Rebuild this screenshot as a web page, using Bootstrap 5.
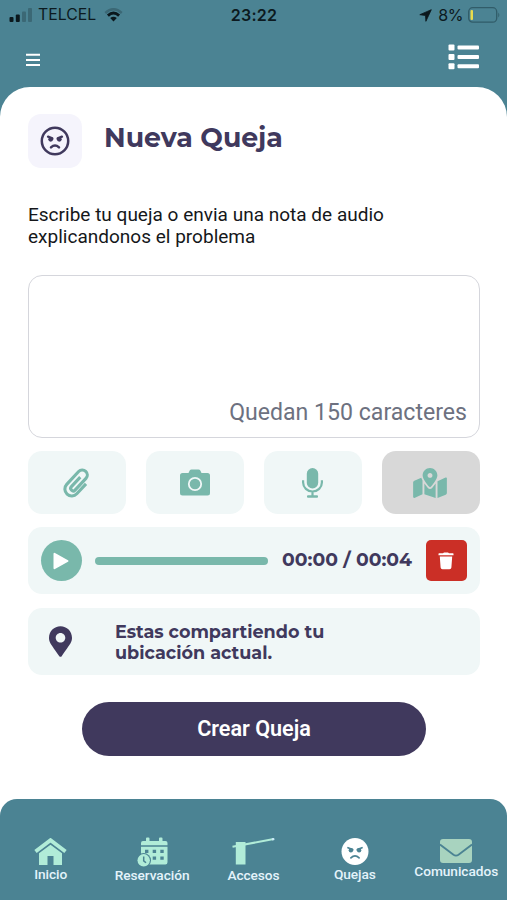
<!DOCTYPE html>
<html lang="es">
<head>
<meta charset="utf-8">
<meta name="viewport" content="width=device-width, initial-scale=1">
<title>Nueva Queja</title>
<link href="https://cdn.jsdelivr.net/npm/bootstrap@5.3.0/dist/css/bootstrap.min.css" rel="stylesheet">
<style>
:root{--teal:#4b8393;--green:#79b8ab;--pale:#f0f7f7;--ink:#40395d;--mint:#b1ecd8}
body{height:900px;background:var(--teal);font-family:Roboto,sans-serif;color:#15171a;overflow:hidden}
svg{display:block;flex:none}
.status-bar{height:30px;padding:0 8px 0 9px;font-family:Inter,sans-serif;font-size:16px;line-height:30px;color:#0c1a20}
.status-side{flex:1 1 0}
.carrier{font-size:15.8px;margin-left:6px;margin-right:8px}
.clock{font-weight:600;font-size:16px;letter-spacing:.3px}
.battery-level{margin-left:6px;margin-right:4px;letter-spacing:-.4px}
.top-bar{height:57px;padding:0 28px 0 26px}
.sheet{background:#fff;border-radius:30px 30px 0 0;padding:27px 27px 0 28px}
.face-tile{width:54px;height:54px;border-radius:13px;background:#f5f4fc}
.geo{font-family:Montserrat,Inter,sans-serif;font-weight:700;color:var(--ink)}
.title-text{font-size:26.8px;line-height:34px;margin:7px 0 0 22px}
.intro{font-size:19px;line-height:22px;letter-spacing:.01px;margin:36px 0 27px}
.note-box{height:163px;border:1.5px solid #d5d6dc;border-radius:14px;padding:0 12px 10px;font-size:23.1px;line-height:28px;color:#6d7180}
.tools{gap:20px;margin-top:13px}
.tool{flex:1 1 0;height:63px;border-radius:14px;background:var(--pale);color:var(--green);border:0}
.tool.chosen{background:#d8d8d8}
.strip{height:67px;border-radius:14px;background:var(--pale);margin-top:13px;padding:0 13px}
.strip + .strip{margin-top:14px}
.play{width:41px;height:41px;background:var(--green);border:0}
.track{height:8px;border-radius:4px;background:var(--green);margin:0 14px 0 13px;width:173px}
.time{font-size:18.8px;white-space:nowrap}
.trash{width:41px;height:41px;border-radius:5px;background:#cb2f26;border:0}
.place{font-size:17.6px;line-height:21px;margin-left:43px}
.send{width:344px;height:54px;margin:27px auto 0;background:var(--ink);font-size:21.6px;font-weight:600;line-height:54px;color:#fff}
.tab-wrap{background:#fff;height:101px}
.tabs{height:101px;background:var(--teal);border-radius:17px 17px 0 0;font-size:13.7px;font-weight:500;line-height:16px;color:#e9f5fa}
.tab{width:101.4px;color:var(--mint)}
.tab span{color:#e4f3fb;white-space:nowrap;letter-spacing:-.05px}
</style>
<script src="https://cdn.jsdelivr.net/npm/bootstrap@5.3.0/dist/js/bootstrap.bundle.min.js"></script>
</head>
<body class="d-flex flex-column m-0">
<header>
  <div class="status-bar d-flex align-items-center">
    <div class="status-side d-flex align-items-center">
      <svg width="23" height="15" viewBox="0 0 23 15" fill="#0b181d"><rect x=".5" y="9" width="4" height="5" rx="1"/><rect x="6.800" y="6.500" width="4" height="7.500" rx="1"/><rect x="13" y="3.500" width="4" height="10.500" rx="1" opacity=".25"/><rect x="19" y="0" width="4" height="14" rx="1" opacity=".25"/></svg>
      <span class="carrier">TELCEL</span>
      <svg width="19" height="15" viewBox="0 0 19 15" fill="none" stroke="#0b181d" stroke-width="2.400"><path d="M1.300 5Q9.500-2.500 17.700 5" opacity=".25"/><path d="M3.900 7.600Q9.500 2.600 15.100 7.600" stroke-width="2.900"/><path d="M6.200 10.100Q9.500 7.300 12.800 10.100L9.500 13.600z" fill="#0b181d" stroke="none"/></svg>
    </div>
    <span class="clock">23:22</span>
    <div class="status-side d-flex align-items-center justify-content-end">
      <svg width="13" height="13" viewBox="0 0 13 13" fill="#0b181d" stroke="#0b181d" stroke-width=".8" stroke-linejoin="round"><path d="M12.300.7.800 5.700 6.500 6.500 6.900 12.300z"/></svg>
      <span class="battery-level">8%</span>
      <svg width="33" height="16" viewBox="0 0 33 16" style="margin-right:-1px"><rect x="1.700" y=".7" width="28" height="14.500" rx="4" fill="none" stroke="#315c69" stroke-width="1.300"/><path d="M31.300 5.500q2 2.500 0 5z" fill="#315c69"/><rect x="3.500" y="3" width="2.500" height="10" rx="1" fill="#e8dc4c"/></svg>
    </div>
  </div>
  <div class="top-bar d-flex justify-content-between align-items-center">
    <svg width="14" height="14" viewBox="0 0 14 14" fill="#fff" style="margin-top:3px"><path d="M0 .7h14v2H0zM0 5.900h14v2H0zM0 11.100h14v2H0z"/></svg>
    <svg width="31" height="26" viewBox="0 0 31 26" fill="#fff" style="margin-top:-3px"><rect x=".5" y=".5" width="6" height="6" rx="1"/><rect x=".5" y="9.900" width="6" height="6" rx="1"/><rect x=".5" y="19.300" width="6" height="6" rx="1"/><rect x="9.500" y="1.500" width="21.500" height="4" rx="1"/><rect x="9.500" y="10.900" width="21.500" height="4" rx="1"/><rect x="9.500" y="20.300" width="21.500" height="4" rx="1"/></svg>
  </div>
</header>

<main class="sheet flex-grow-1">
  <div class="d-flex">
    <div class="face-tile d-flex align-items-center justify-content-center">
      <svg width="30" height="30" viewBox="0 0 30 30" fill="none" stroke="#40395d" stroke-width="2.500" stroke-linecap="round" stroke-linejoin="round" style="margin-right:1px"><circle cx="15" cy="15" r="13.200"/><path d="M8.100 10.700 12.300 12.300M21.900 10.700 17.700 12.300" stroke-width="2.500"/><path d="M11 21.400Q15 17.600 19 21.400"/><g fill="#40395d" stroke="none"><circle cx="10.700" cy="13.300" r="2.400"/><circle cx="19.300" cy="13.300" r="2.400"/></g></svg>
    </div>
    <h1 class="geo title-text mb-0">Nueva Queja</h1>
  </div>
  <p class="intro">Escribe tu queja o envia una nota de audio<br>explicandonos el problema</p>
  <div class="note-box d-flex align-items-end justify-content-end">Quedan 150 caracteres</div>

  <div class="tools d-flex">
    <button class="tool d-flex align-items-center justify-content-center" aria-label="Adjuntar">
      <svg width="28" height="30" viewBox="0 0 28 30" fill="none" stroke="currentColor" stroke-linejoin="round" style="margin-right:1px"><path transform="translate(14 15) rotate(43)" d="M7.200-5.500V8A6.900 6.900 0 0 1-6.600 8V-9.500A5 5 0 0 1 3.400-9.500V6.500A2.500 2.500 0 0 1-1.600 6.500V-6.500" stroke-width="3.100"/></svg>
    </button>
    <button class="tool d-flex align-items-center justify-content-center" aria-label="Cámara">
      <svg width="30" height="27" viewBox="0 0 30 27"><path d="M2.500 4H8.500L9.700 1.600Q10.300.5 11.500.5H18.500Q19.700.5 20.300 1.600L21.500 4H27.500Q30 4 30 6.500V24Q30 26.500 27.500 26.500H2.500Q0 26.500 0 24V6.500Q0 4 2.500 4z" fill="currentColor"/><circle cx="15" cy="15" r="6.200" fill="none" stroke="#f0f7f7" stroke-width="1.800"/></svg>
    </button>
    <button class="tool d-flex align-items-center justify-content-center" aria-label="Micrófono">
      <svg width="21" height="30" viewBox="0 0 21 30" fill="currentColor" style="margin-right:1px"><rect x="4.800" y="0" width="11.400" height="20.500" rx="5.700"/><path d="M1.100 12.300V14.500A9.400 9 0 0 0 19.900 14.500V12.300M10.500 23V29" fill="none" stroke="currentColor" stroke-width="2.200"/><rect x="5" y="27.300" width="11" height="2.500" rx="1"/></svg>
    </button>
    <button class="tool chosen d-flex align-items-center justify-content-center" aria-label="Ubicación">
      <svg width="34" height="30" viewBox="0 0 576 512" fill="currentColor" style="margin-right:2px"><path d="M288 0c-69.590 0-126 56.410-126 126 0 56.260 82.350 158.800 113.900 196.020 6.390 7.540 17.820 7.540 24.200 0C331.650 284.800 414 182.260 414 126 414 56.410 357.590 0 288 0zm0 168c-23.200 0-42-18.800-42-42s18.800-42 42-42 42 18.800 42 42-18.800 42-42 42zM20.120 215.950A32 32 0 0 0 0 245.660v250.320c0 11.320 11.430 19.060 21.940 14.860L160 448V214.920c-8.840-15.980-16.070-31.540-21.250-46.420zM288 359.670c-14.070 0-27.380-6.180-36.510-16.960-19.660-23.200-40.570-49.620-59.490-76.720v182l192 64V266c-18.920 27.090-39.820 53.520-59.490 76.720-9.130 10.770-22.440 16.950-36.510 16.950zm266.060-198.510L416 224v288l139.880-55.950A32 32 0 0 0 576 426.340V176.020c0-11.320-11.430-19.060-21.940-14.860z"/></svg>
    </button>
  </div>

  <div class="strip d-flex align-items-center">
    <button class="play rounded-circle p-0 d-flex align-items-center justify-content-center" aria-label="Reproducir"><svg width="16" height="18" viewBox="0 0 16 18" fill="#fff" stroke="#fff" stroke-width="2" stroke-linejoin="round" style="margin-right:1px"><path d="M1.500 1.800V16.200L14.500 9z"/></svg></button>
    <div class="track"></div>
    <span class="geo time">00:00 / 00:04</span>
    <button class="trash ms-auto p-0 d-flex align-items-center justify-content-center" aria-label="Eliminar"><svg width="16" height="18" viewBox="0 0 16 18" fill="#fff" style="margin-right:1px"><path d="M1 1.300H5L6 .5H10L11 1.300H15Q15.500 1.300 15.500 2V3.200H.5V2Q.5 1.300 1 1.300zM1.800 4.500H14.200L13.400 15.500Q13.200 17.300 11.500 17.300H4.500Q2.800 17.300 2.600 15.500z"/></svg></button>
  </div>

  <div class="strip d-flex align-items-center">
    <svg width="23" height="31" viewBox="0 0 384 512" fill="#40395d" style="margin-left:8px"><path d="M172.268 501.670C26.970 291.031 0 269.413 0 192 0 85.961 85.961 0 192 0s192 85.961 192 192c0 77.413-26.970 99.031-172.268 309.670-9.535 13.774-29.930 13.773-39.464 0zM192 272c44.183 0 80-35.817 80-80s-35.817-80-80-80-80 35.817-80 80 35.817 80 80 80z"/></svg>
    <div class="geo place">Estas compartiendo tu<br>ubicación actual.</div>
  </div>

  <button class="btn rounded-pill border-0 p-0 d-block send">Crear Queja</button>
</main>

<footer class="tab-wrap">
  <nav class="tabs d-flex">
    <div class="tab d-flex flex-column align-items-center" style="padding-top:39px">
      <svg width="33" height="28" viewBox="0 0 33 28"><path d="M1.500 13.500 16.500 2.200 31.500 13.500" fill="none" stroke="currentColor" stroke-width="3.900"/><path d="M5 15.200 16.500 6.800 28 15.200V27H19.500V18H13.500V27H5z" fill="currentColor"/></svg>
      <span>Inicio</span>
    </div>
    <div class="tab d-flex flex-column align-items-center" style="padding-top:38px">
      <svg width="32" height="30" viewBox="0 0 32 30" style="margin-left:2px"><g fill="currentColor"><path d="M4 8.200V6Q4 4 6 4H9V1.500Q9 .5 10 .5H11.500Q12.500.5 12.500 1.500V4H22V1.500Q22 .5 23 .5H24.500Q25.500.5 25.500 1.500V4H28.500Q30.500 4 30.500 6V8.200zM4 9.800H30.500V25.300Q30.500 27.500 28.300 27.500H4z"/></g><g fill="#4b8393"><path d="M8 12.800h3.400v3.200H8zM15.700 12.800h3.400v3.200h-3.400zM23.300 12.800h3.400v3.200h-3.400zM15.700 19.500h3.400v3.200h-3.400zM23.300 19.500h3.400v3.200h-3.400z"/><circle cx="6.700" cy="23.300" r="7.300"/></g><circle cx="6.700" cy="23.300" r="6.200" fill="currentColor"/><path d="M6.700 19.600V23.800L9 25.800" fill="none" stroke="#4b8393" stroke-width="1.500"/></svg>
      <span>Reservación</span>
    </div>
    <div class="tab d-flex flex-column align-items-center" style="padding-top:38px">
      <svg width="43" height="30" viewBox="0 0 43 30"><path d="M.5 9.800 41.800 2" stroke="currentColor" stroke-width="2"/><path d="M3.800 5H13.500V27.500H3.800z" fill="currentColor"/><path d="M40 2.400 42.300 2" stroke="#cbeaf9" stroke-width="2.200"/></svg>
      <span>Accesos</span>
    </div>
    <div class="tab d-flex flex-column align-items-center" style="padding-top:38px">
      <svg width="28" height="29" viewBox="0 0 28 29"><circle cx="14" cy="14.500" r="13.500" fill="#fff"/><g fill="none" stroke="#4b8393" stroke-width="1.700" stroke-linecap="round"><path d="M7 10.700 11.700 12.600M21 10.700 16.300 12.600M9.900 20.900Q14 16.900 18.100 20.900"/></g><circle cx="9.900" cy="13.200" r="2.200" fill="#4b8393"/><circle cx="18.100" cy="13.200" r="2.200" fill="#4b8393"/></svg>
      <span>Quejas</span>
    </div>
    <div class="tab d-flex flex-column align-items-center" style="padding-top:40px">
      <svg width="32" height="24" viewBox="0 0 32 24"><rect width="32" height="24" rx="3" fill="#a8d3bf"/><path d="M0 5.500 13.500 15.700Q16 17.500 18.500 15.700L32 5.500" fill="none" stroke="#4b8393" stroke-width="1.800"/></svg>
      <span>Comunicados</span>
    </div>
  </nav>
</footer>
</body>
</html>
